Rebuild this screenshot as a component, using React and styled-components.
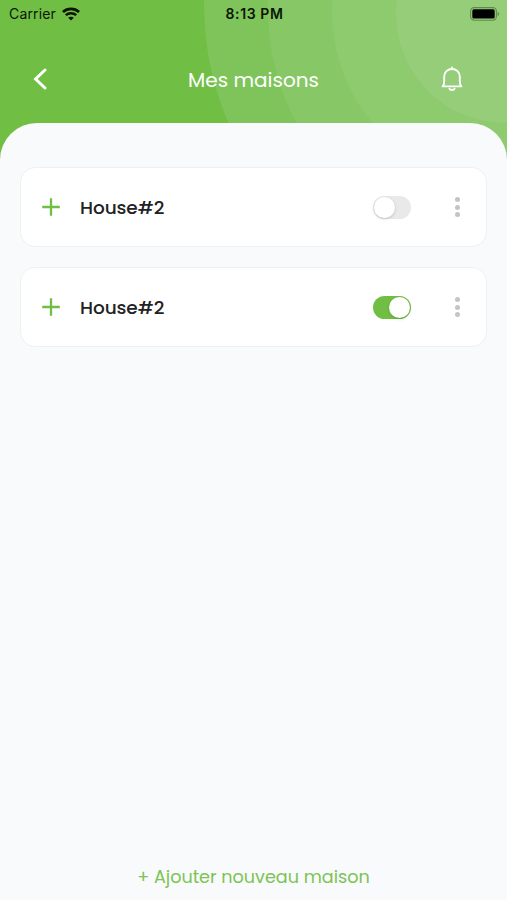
import { useState } from "react";
import styled, { createGlobalStyle } from "styled-components";

const App = () => {
  const [houses, setHouses] = useState([
    { id: 1, name: "House#2", active: false },
    { id: 2, name: "House#2", active: true },
  ]);

  const toggle = (id) =>
    setHouses(
      houses.map((h) => (h.id === id ? { ...h, active: !h.active } : h))
    );

  return (
    <Screen>
      <GlobalStyle />
      <Header>
        <Rings />
        <StatusBar>
          <Carrier>
            <span>Carrier</span>
            <WifiIcon />
          </Carrier>
          <Clock>8:13 PM</Clock>
          <BatteryIcon />
        </StatusBar>
        <NavBar>
          <IconButton aria-label="Retour">
            <BackIcon />
          </IconButton>
          <Title>Mes maisons</Title>
          <IconButton aria-label="Notifications">
            <BellIcon />
          </IconButton>
        </NavBar>
      </Header>
      <Sheet>
        <HouseList>
          {houses.map((house) => (
            <HouseCard key={house.id}>
              <PlusIcon />
              <HouseName>{house.name}</HouseName>
              <Toggle
                $on={house.active}
                role="switch"
                aria-checked={house.active}
                onClick={() => toggle(house.id)}
              >
                <Knob />
              </Toggle>
              <Dots>
                <i />
                <i />
                <i />
              </Dots>
            </HouseCard>
          ))}
        </HouseList>
        <AddButton>+ Ajouter nouveau maison</AddButton>
      </Sheet>
    </Screen>
  );
};
export default App;

const Rings = () => (
  <Backdrop width="507" height="160" viewBox="0 0 507 160">
    <circle cx="505" cy="4" r="301" fill="#7ec45b" />
    <circle cx="505" cy="10" r="237" fill="#88c765" />
    <circle cx="505" cy="12" r="173" fill="#8eca6e" />
    <circle cx="505" cy="14" r="109" fill="#95cd78" />
  </Backdrop>
);

const WifiIcon = () => (
  <svg width="18" height="14" viewBox="0 0 18 14" fill="none" stroke="#0b1606">
    <path d="M.9 5C5.5.8 12.5.8 17.1 5" strokeWidth="2.8" />
    <path d="M3.8 8.2c2.9-2.7 7.5-2.7 10.4 0" strokeWidth="2.5" />
    <path
      d="M9 13.6 6.2 10.7c1.5-1.4 4.1-1.4 5.6 0Z"
      fill="#0b1606"
      stroke="none"
    />
  </svg>
);

const BatteryIcon = () => (
  <svg width="30" height="14" viewBox="0 0 30 14">
    <rect
      x=".6"
      y=".6"
      width="25.8"
      height="12.6"
      rx="3.6"
      fill="none"
      stroke="#5f8a4b"
      strokeWidth="1.1"
    />
    <rect x="2.3" y="2.3" width="22.4" height="9.2" rx="1.6" fill="#000" />
    <path d="M27.6 4.8c2 .8 2 3.6 0 4.4Z" fill="#5f8a4b" />
  </svg>
);

const BackIcon = () => (
  <svg width="14" height="22" viewBox="0 0 14 22" fill="none" stroke="#fff">
    <path d="M12 2 2.6 11l9.4 9" strokeWidth="3" strokeLinecap="round" />
  </svg>
);

const BellIcon = () => (
  <svg width="22" height="26" viewBox="0 0 22 26" fill="none" stroke="#fff">
    <path
      d="M1.6 20.4c1.3-1.2 1.6-2.8 1.6-5V10.6C3.2 6 6.7 3 11 3s7.8 3 7.8 7.6v4.8c0 2.2.3 3.8 1.6 5Z"
      strokeWidth="1.9"
      strokeLinejoin="round"
    />
    <path
      d="M11 1.4v1.4M8.4 22.6a2.7 1.9 0 0 0 5.2 0"
      strokeWidth="1.9"
      strokeLinecap="round"
    />
  </svg>
);

const PlusIcon = () => (
  <svg width="18" height="18" viewBox="0 0 18 18" stroke="#70bf44">
    <path d="M9 .2v17.6M.2 9h17.6" strokeWidth="2.3" />
  </svg>
);

const GlobalStyle = createGlobalStyle`
  * {
    box-sizing: border-box;
  }

  body {
    margin: 0;
    font-family: Poppins, Inter, "Liberation Sans", sans-serif;
  }

  button {
    padding: 0;
    border: 0;
    background: none;
    font-family: inherit;
    cursor: pointer;
  }

  svg {
    display: block;
    flex-shrink: 0;
  }
`;

const Screen = styled.div`
  height: 100vh;
  min-height: 900px;
  display: flex;
  flex-direction: column;
  background: #f9fafc;
`;

const Header = styled.header`
  position: relative;
  height: 160px;
  flex-shrink: 0;
  overflow: hidden;
  background: #70bf44;
`;

const Backdrop = styled.svg`
  position: absolute;
  top: 0;
  right: 0;
`;

const StatusBar = styled.div`
  position: relative;
  height: 28px;
  padding: 0 7px 1px 9px;
  display: grid;
  grid-template-columns: 1fr auto 1fr;
  align-items: center;
  color: #0b1606;
  font-family: Inter, "Liberation Sans", sans-serif;

  > :last-child {
    justify-self: end;
  }
`;

const Carrier = styled.div`
  display: flex;
  align-items: center;
  gap: 6px;
  font-size: 14px;
  letter-spacing: 0.15px;
`;

const Clock = styled.span`
  font-size: 14px;
  font-weight: 600;
  letter-spacing: 0.6px;
`;

const NavBar = styled.nav`
  position: relative;
  height: 102px;
  padding: 0 44px 0 33px;
  display: grid;
  grid-template-columns: 14px 1fr 22px;
  align-items: center;
`;

const IconButton = styled.button`
  display: flex;
`;

const Title = styled.h1`
  margin: 2px 0 0 19px;
  color: #fff;
  font-size: 20px;
  font-weight: 400;
  text-align: center;
`;

const Sheet = styled.main`
  position: relative;
  flex: 1;
  margin-top: -37px;
  padding: 44px 20px 0;
  display: flex;
  flex-direction: column;
  border-radius: 37px 37px 0 0;
  background: #f9fafc;
`;

const HouseList = styled.div`
  flex: 1;
  display: flex;
  flex-direction: column;
  gap: 20px;
`;

const HouseCard = styled.div`
  height: 80px;
  padding: 0 26px 0 21px;
  display: flex;
  align-items: center;
  border: 1px solid #eef1f1;
  border-radius: 15px;
  background: #fff;
`;

const HouseName = styled.span`
  flex: 1;
  padding: 1px 0 0 20px;
  color: #222;
  font-size: 18.5px;
  font-weight: 500;
  letter-spacing: -0.1px;
`;

const Toggle = styled.button`
  width: 38px;
  height: 23px;
  padding: 0 1px;
  display: flex;
  align-items: center;
  justify-content: ${({ $on }) => ($on ? "flex-end" : "flex-start")};
  border-radius: 12px;
  background: ${({ $on }) => ($on ? "#70bf44" : "#e9e9e9")};
`;

const Knob = styled.span`
  width: 21px;
  height: 21px;
  border-radius: 50%;
  background: #fff;
  box-shadow: 0 1px 3px rgba(0, 0, 0, 0.18);
`;

const Dots = styled.div`
  margin-left: 44px;
  display: flex;
  flex-direction: column;
  gap: 2.5px;

  i {
    width: 5px;
    height: 5px;
    border-radius: 50%;
    background: #c4c4c4;
  }
`;

const AddButton = styled.button`
  height: 46px;
  color: #7cc454;
  font-size: 17.6px;
`;
